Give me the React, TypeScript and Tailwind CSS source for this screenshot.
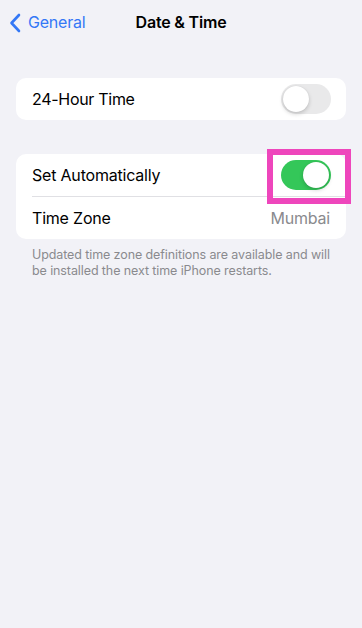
import React from "react";

// Date & Time settings screen (iOS style)

function Toggle({ on }: { on: boolean }) {
  return (
    <div
      className={
        "relative h-[30px] w-[50px] rounded-full " + (on ? "bg-[#34c759]" : "bg-[#e9e9ea]")
      }
    >
      <div
        className={
          "absolute top-[2px] h-[26px] w-[26px] rounded-full bg-white shadow-[0_2px_4px_rgba(0,0,0,0.18),0_0_1px_rgba(0,0,0,0.12)] " +
          (on ? "right-[2px]" : "left-[2px]")
        }
      />
    </div>
  );
}

export default function App() {
  return (
    <div
      className="relative h-[628px] w-[362px] overflow-hidden bg-[#f2f2f7] text-black"
      style={{ fontFamily: "Inter, 'Noto Sans', sans-serif" }}
    >
      {/* nav bar */}
      <div className="relative flex h-[44px] items-center">
        <div className="flex items-center pl-[9px] text-[#3478f6]">
          <svg width="12" height="20" viewBox="0 0 12 20" fill="none" className="mt-[1px]">
            <path d="M10 2L2.5 10L10 18" stroke="currentColor" strokeWidth="2.6" strokeLinecap="round" strokeLinejoin="round" />
          </svg>
          <span className="ml-[7px] text-[16px] tracking-[-0.2px]">General</span>
        </div>
        <div className="absolute inset-x-0 top-0 flex h-[44px] items-center justify-center">
          <span className="text-[16px] font-semibold tracking-[-0.2px]">Date &amp; Time</span>
        </div>
      </div>

      <div className="px-4 pt-[34px]">
        <div className="flex h-[42px] items-center justify-between rounded-[10px] bg-white pl-4 pr-[15px]">
          <span className="text-[16px] tracking-[-0.3px]">24-Hour Time</span>
          <Toggle on={false} />
        </div>

        <div className="mt-[34px] rounded-[10px] bg-white">
          <div className="flex h-[42px] items-center justify-between pl-4 pr-[15px]">
            <span className="text-[16px] tracking-[-0.2px]">Set Automatically</span>
            <Toggle on={true} />
          </div>
          <div className="ml-4 h-px bg-[#e0e0e4]" />
          <div className="flex h-[42px] items-center justify-between pl-4 pr-4">
            <span className="text-[16px] tracking-[-0.2px]">Time Zone</span>
            <span className="text-[16px] tracking-[-0.2px] text-[#8a8a8e]">Mumbai</span>
          </div>
        </div>

        <p className="pl-4 pr-2 pt-[8px] text-[12.5px] leading-[16px] tracking-[-0.1px] text-[#8a8a8e]">
          Updated time zone definitions are available and will be installed the next time iPhone restarts.
        </p>
      </div>

      {/* highlight box */}
      <div className="absolute left-[267px] top-[149px] h-[55px] w-[84px] border-[6px] border-[#ee46bc]" />
    </div>
  );
}
